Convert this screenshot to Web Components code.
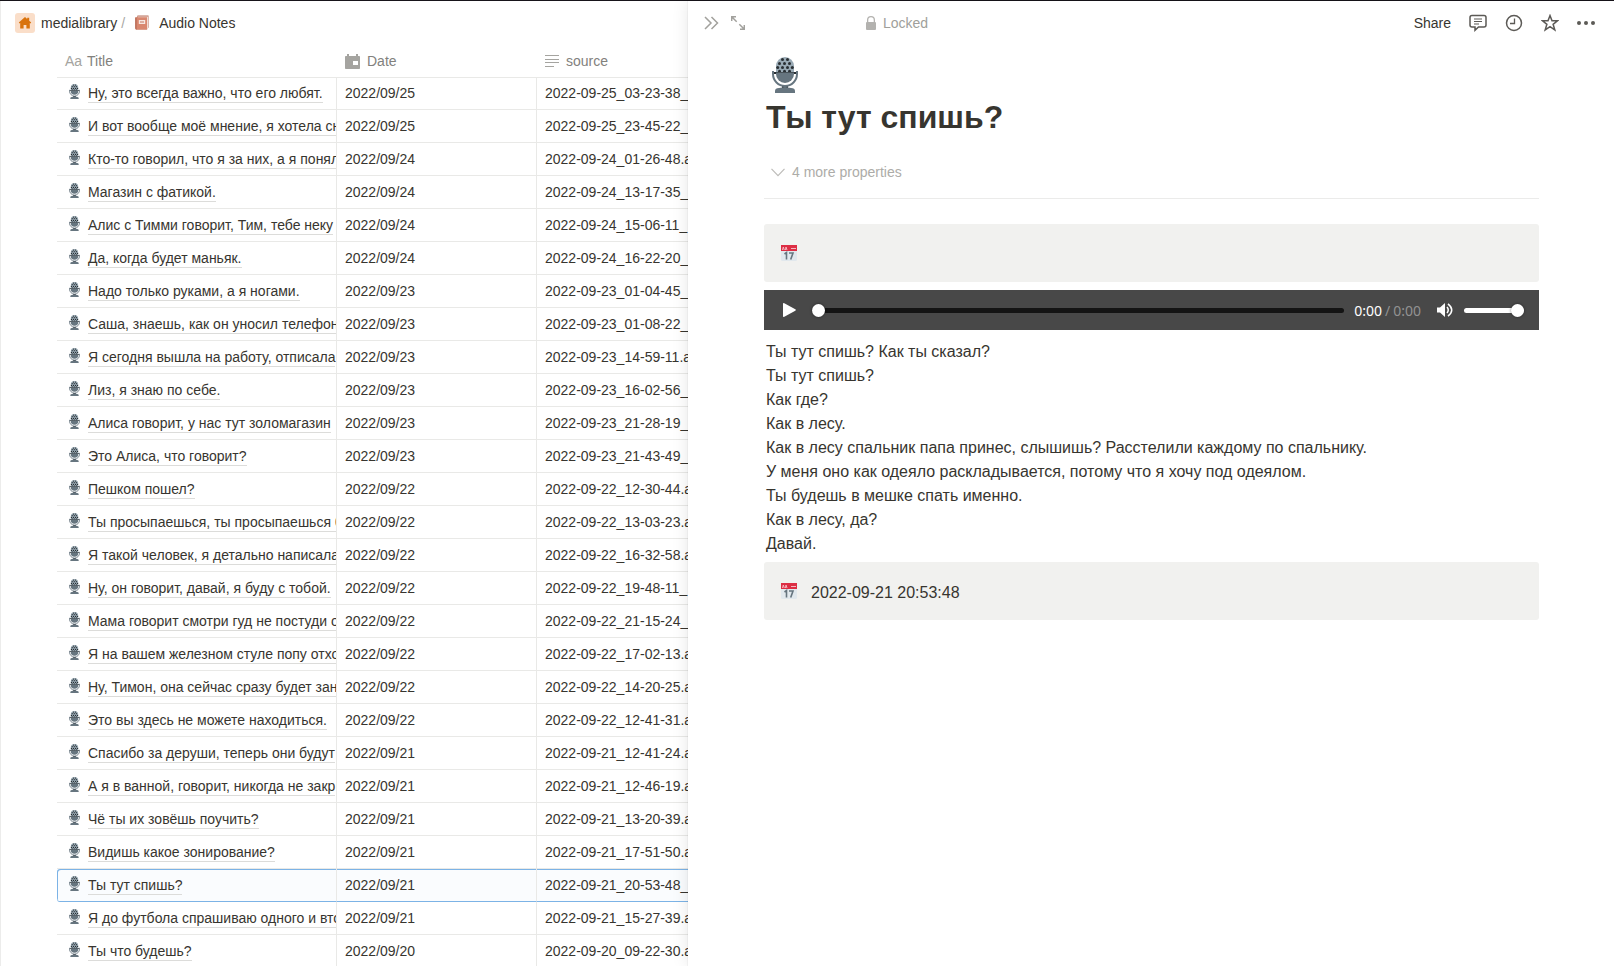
<!DOCTYPE html>
<html lang="ru">
<head>
<meta charset="utf-8">
<title>Audio Notes</title>
<style>
html, body { margin: 0; height: 100%; }
body { font-family: "Liberation Sans", Arial, sans-serif; font-size: 14px; color: #37352f; background: #fff; overflow: hidden; }
</style>
</head>
<body>
<media-library></media-library>

<template id="t-app">
<style>
:host { display: grid; grid-template-columns: minmax(0, 688fr) minmax(0, 926fr); grid-template-rows: minmax(0, 1fr); height: 100vh; box-sizing: border-box; border-top: 1px solid #17141a; }
main { min-width: 0; overflow: hidden; border-left: 1px solid #ececeb; display: flex; flex-direction: column; }
</style>
<main>
  <bread-crumbs></bread-crumbs>
  <notes-table></notes-table>
</main>
<side-peek></side-peek>
</template>

<template id="t-crumbs">
<style>
:host { display: block; height: 44px; flex: none; }
nav { display: flex; align-items: center; height: 44px; padding-left: 14px; font-size: 14px; line-height: 18px; }
a { display: flex; align-items: center; color: #37352f; text-decoration: none; white-space: nowrap; }
.home { width: 20px; height: 20px; border-radius: 3px; background: #fadec9; margin-right: 6px; display: flex; align-items: center; justify-content: center; }
.sep { color: #a9a8a4; margin: 0 9px 0 4px; }
.book { margin-right: 9px; }
svg { display: block; }
</style>
<nav aria-label="Breadcrumb">
  <a href="#library"><span class="home"><svg width="14" height="14" viewBox="0 0 14 14" fill="#d9730d"><path d="M7 1 0.8 6.6l.8.9.6-.4V12.6h3.4V9h2.8v3.6h3.4V7.1l.6.4.8-.9-2-1.8V1.8h-2v1.2z"/></svg></span>medialibrary</a>
  <span class="sep">/</span>
  <a href="#notes"><svg class="book" width="16" height="16" viewBox="0 0 16 16"><path d="M3 1.200Q3 .6 4 .6h10.500v12l-1.500 2H2z" fill="#b9705c"/><path d="M3 1.400h11v12l-1 1z" fill="#f2ddd5"/><path d="M1.200 3Q1.200 2.300 2 2.300h11v12.200H2.800q-1.600 0-1.600-1.500z" fill="#d9876f"/><path d="M1.200 2.600h1.500v11.900q-1.500 0-1.500-1.500z" fill="#b9705c"/><path d="M4.800 5h6.400v4H4.800z" fill="#f6e7e1"/><path d="M6 6.400h4v1.200H6z" fill="#cf8b79"/></svg>Audio Notes</a>
</nav>
</template>

<template id="t-mic">
<style>:host { display: inline-block; width: 11px; height: 15px; } svg { display: block; width: 100%; height: 100%; }</style>
<svg viewBox="0 0 26 36" aria-hidden="true">
<path d="M4 15V9a9 9 0 0 1 18 0v6z" fill="#99aab5"/>
<g fill="#292f33"><circle cx="10.500" cy="2.500" r="1.500"/><circle cx="15.500" cy="2.500" r="1.500"/><circle cx="7.500" cy="6.500" r="1.500"/><circle cx="12.500" cy="6.500" r="1.500"/><circle cx="17.500" cy="6.500" r="1.500"/><circle cx="5.700" cy="10.500" r="1.500"/><circle cx="10.500" cy="10.500" r="1.500"/><circle cx="15.500" cy="10.500" r="1.500"/><circle cx="20.300" cy="10.500" r="1.500"/><circle cx="7.500" cy="14.200" r="1.500"/><circle cx="12.500" cy="14.200" r="1.500"/><circle cx="17.500" cy="14.200" r="1.500"/><path d="M2 15h22v2H2zM10 29h6v2.500h-6z"/></g>
<path d="M4 15.500h18V17a9 9 0 0 1-18 0z" fill="#66757f"/>
<path d="M1 14v3a12 12 0 0 0 24 0v-3" fill="none" stroke="#66757f" stroke-width="2"/>
<path d="M3 36v-2q0-3 4-3l6-1 6 1q4 0 4 3v2z" fill="#66757f"/>
</svg>
</template>

<template id="t-table">
<style>
:host { display: block; padding: 0 0 0 56px; flex: none; }
table { table-layout: fixed; border-collapse: separate; border-spacing: 0; width: 831px; font-size: 14px; }
th { height: 32px; padding: 0 0 0 8px; text-align: left; font-weight: 400; color: #82817d; border-bottom: 1px solid #e9e9e7; }
th + th { padding-left: 9px; }
th span { display: flex; align-items: center; gap: 7px; }
th svg { display: block; flex: none; }
.aa { color: #a5a4a0; width: 16px; display: block; font-weight: 400; }
th:first-child span { gap: 6px; }
td { height: 32px; padding: 0 0 0 8px; border-bottom: 1px solid #e9e9e7; white-space: nowrap; overflow: hidden; vertical-align: middle; line-height: 20px; }
tr:first-child td { height: 30px; padding-bottom: 1px; }
td + td { border-left: 1px solid #e9e9e7; }
.title { display: flex; align-items: center; }
note-mic { flex: none; margin: 0 8px 4px 4px; }
a { color: inherit; text-decoration: none; border-bottom: 1px solid #dcdcda; line-height: 18px; margin-top: 1px; }
tr.sel td { background: #fafcfe; box-shadow: inset 0 1px #7cb3e6; border-bottom-color: #7cb3e6; }
tr.sel td:first-child { box-shadow: inset 1px 1px #7cb3e6; border-radius: 3px 0 0 3px; }
</style>
<table>
<colgroup><col style="width:279px"><col style="width:200px"><col style="width:352px"></colgroup>
<thead><tr>
<th scope="col"><span><b class="aa">Aa</b>Title</span></th>
<th scope="col"><span><svg width="15" height="15" viewBox="0 0 15 15" fill="#a5a4a0"><path fill-rule="evenodd" d="M2 2V0h2v2h7V0h2v2h1.200q.8 0 .8.8v11.400q0 .8-.8.8H.8q-.8 0-.8-.8V2.800Q0 2 .8 2zM8 7h5v4H8z"/></svg>Date</span></th>
<th scope="col"><span><svg width="14" height="12" viewBox="0 0 14 12" fill="#a5a4a0"><path d="M0 0h14v1H0zM0 4h14v1H0zM0 7h14v1H0zM0 11h9v1H0z"/></svg>source</span></th>
</tr></thead>
<tbody></tbody>
</table>
</template>

<template id="t-peek">
<style>
:host { display: flex; flex-direction: column; min-width: 0; background: #fff; box-shadow: 0 0 16px rgba(15,15,15,.1), 0 0 0 1px rgba(15,15,15,.03); position: relative; }
article { padding: 0 75px 0 76px; display: flex; flex-direction: column; }
.big { width: 26px; height: 36px; margin: 12px 0 0 8px; }
h1 { margin: 0; padding: 5px 2px 0; font-size: 32px; line-height: 38px; font-weight: 700; }
.more { align-self: flex-start; display: flex; align-items: center; gap: 7px; margin-top: 22px; padding: 0 0 0 7px; height: 28px; border: 0; background: none; font: inherit; color: #adaca8; }
hr { width: 100%; border: 0; border-top: 1px solid #ebebea; margin: 12px 0 25px; }
.body { padding: 0 2px; margin: 10px 0 6px; font-size: 16px; line-height: 24px; }
p { margin: 0; }
audio-bar { margin-top: 8px; }
</style>
<peek-bar></peek-bar>
<article>
<note-mic class="big"></note-mic>
<h1>Ты тут спишь?</h1>
<button class="more"><svg width="14" height="9" viewBox="0 0 14 9" fill="none" stroke="#bdbcb9" stroke-width="1.200"><path d="M.5.8 7 7.600 13.500.8"/></svg>4 more properties</button>
<hr>
<date-callout></date-callout>
<audio-bar></audio-bar>
<div class="body">
<p>Ты тут спишь? Как ты сказал?</p><p>Ты тут спишь?</p><p>Как где?</p><p>Как в лесу.</p><p>Как в лесу спальник папа принес, слышишь? Расстелили каждому по спальнику.</p><p>У меня оно как одеяло раскладывается, потому что я хочу под одеялом.</p><p>Ты будешь в мешке спать именно.</p><p>Как в лесу, да?</p><p>Давай.</p>
</div>
<date-callout>2022-09-21 20:53:48</date-callout>
</article>
</template>

<template id="t-bar">
<style>
:host { display: flex; align-items: center; height: 44px; flex: none; padding: 0 19px 0 16px; }
button { border: 0; padding: 0; background: none; font: inherit; line-height: 18px; color: #37352f; display: flex; align-items: center; }
svg { display: block; fill: none; stroke: #5c5a56; stroke-width: 1.500; }
.grey svg { stroke: #a2a19d; stroke-width: 1.500; }
.left { display: flex; align-items: center; gap: 12px; }
.lock { margin-left: 121px; gap: 7px; color: #a09f9b; }
.right { margin-left: auto; display: flex; align-items: center; gap: 18px; }
</style>
<div class="left">
<button class="grey" aria-label="Close"><svg width="15" height="14" viewBox="0 0 15 14"><path d="M1 1l6 6-6 6M7.500 1l6 6-6 6"/></svg></button>
<button class="grey" aria-label="Open as page"><svg width="14" height="14" viewBox="0 0 14 14"><path d="M.7 5V.7H5M.7.7l5 5M13.300 9v4.300H9M13.300 13.300l-5-5"/></svg></button>
</div>
<button class="lock"><svg style="stroke:none;fill:#b3b2af" width="10" height="14" viewBox="0 0 10 14"><path fill-rule="evenodd" d="M1 6V4a4 4 0 0 1 8 0v2q1 0 1 1v6q0 1-1 1H1q-1 0-1-1V7q0-1 1-1zM2.300 6h5.400V4a2.700 2.700 0 0 0-5.400 0z"/></svg>Locked</button>
<div class="right">
<button>Share</button>
<button aria-label="Comments"><svg width="18" height="18" viewBox="0 0 18 18"><path d="M3 1.500h12q2 0 2 2v7.500q0 2-2 2H9.500L6 16.300V13H3q-2 0-2-2V3.500q0-2 2-2z"/><path stroke-width="1.200" d="M5 5h8M5 7.500h8M5 10h5"/></svg></button>
<button aria-label="Updates"><svg width="18" height="18" viewBox="0 0 18 18"><circle cx="9" cy="9" r="7.500"/><path d="M9.500 4.500v5H5" stroke-width="1.300"/></svg></button>
<button aria-label="Favorite"><svg width="18" height="18" viewBox="0 0 18 18"><path d="M9 1.600l2 5.200h5.500l-4.400 3.500 1.700 5.600L9 12.600l-4.800 3.300 1.700-5.600L1.500 6.800H7z"/></svg></button>
<button aria-label="More"><svg width="18" height="6" viewBox="0 0 18 6" style="fill:#5c5a56;stroke:none"><circle cx="2" cy="3" r="2"/><circle cx="9" cy="3" r="2"/><circle cx="16" cy="3" r="2"/></svg></button>
</div>
</template>

<template id="t-callout">
<style>
:host { display: flex; align-items: flex-start; box-sizing: border-box; height: 58px; padding: 16px 17px; border-radius: 3px; background: #f1f1ef; font-size: 16px; line-height: 30px; gap: 14px; }
svg { display: block; flex: none; margin-top: 5px; }
</style>
<svg width="16" height="17" viewBox="0 0 16 17" aria-hidden="true"><path d="M0 5h16v9.500q0 1.500-1.500 1.500h-13Q0 16 0 14.500z" fill="#e1e8ed"/><path d="M0 0h16v6H0z" fill="#dd2e44"/><path d="M1.500 5l.8-3 1 3M4.500 5l.5-3 1 3M10 3.500h5" stroke="#f5b8c0" fill="none"/><path d="M3.500 9l2-1.500V14.500M8 8h4L9.700 14.500" stroke="#66757f" stroke-width="1.600" fill="none"/></svg>
<span><slot></slot></span>
</template>

<template id="t-audio">
<style>
:host { display: flex; align-items: center; height: 40px; background: #484848; padding: 0 15px 0 19px; font: 14px "Noto Sans", sans-serif; color: #fff; }
button { border: 0; padding: 0; background: none; display: block; flex: none; }
svg { display: block; }
input { appearance: none; margin: 0; background: transparent; height: 14px; display: block; }
input::-webkit-slider-runnable-track { height: 5px; border-radius: 3px; background: #141414; }
.vol::-webkit-slider-runnable-track { background: #fff; }
input::-webkit-slider-thumb { appearance: none; width: 13px; height: 13px; margin-top: -4px; border-radius: 50%; background: #fff; box-shadow: 0 0 3px rgba(0,0,0,.5); }
.seek { flex: 1; min-width: 0; margin: 0 10px 0 16px; }
.vol { width: 60px; margin-left: 11px; }
.slash { color: #929292; margin: 0 3px; }
.total { color: #929292; margin-right: 16px; }
</style>
<button aria-label="Play"><svg width="13" height="14" viewBox="0 0 13 14" fill="#fff"><path d="M0 1Q0-.3 1.300.3L12.300 6.300q1 .7 0 1.400L1.300 13.700Q0 14.300 0 13z"/></svg></button>
<input class="seek" type="range" min="0" max="100" value="0" aria-label="Position">
<span>0:00</span><span class="slash">/</span><span class="total">0:00</span>
<button aria-label="Mute"><svg width="16" height="14" viewBox="0 0 16 14"><path d="M0 4.500h3L8 0v14L3 9.500H0z" fill="#fff"/><path d="M10 4q2.500 3 0 6M11 .8q7.500 6.200 0 12.400" stroke="#fff" stroke-width="1.500" fill="none"/></svg></button>
<input class="vol" type="range" min="0" max="100" value="100" aria-label="Volume">
</template>

<script>
function component(name, templateId, setup) {
  customElements.define(name, class extends HTMLElement {
    constructor() {
      super();
      const root = this.attachShadow({ mode: 'open' });
      root.append(document.getElementById(templateId).content.cloneNode(true));
      if (setup) setup(root);
    }
  });
}

const notes = [
  ['Ну, это всегда важно, что его любят.', '25', '2022-09-25_03-23-38_'],
  ['И вот вообще моё мнение, я хотела сн', '25', '2022-09-25_23-45-22_'],
  ['Кто-то говорил, что я за них, а я понял', '24', '2022-09-24_01-26-48.a'],
  ['Магазин с фатикой.', '24', '2022-09-24_13-17-35_'],
  ['Алис с Тимми говорит, Тим, тебе неку', '24', '2022-09-24_15-06-11_'],
  ['Да, когда будет маньяк.', '24', '2022-09-24_16-22-20_'],
  ['Надо только руками, а я ногами.', '23', '2022-09-23_01-04-45_'],
  ['Саша, знаешь, как он уносил телефон', '23', '2022-09-23_01-08-22_'],
  ['Я сегодня вышла на работу, отписала', '23', '2022-09-23_14-59-11.a'],
  ['Лиз, я знаю по себе.', '23', '2022-09-23_16-02-56_'],
  ['Алиса говорит, у нас тут золомагазин', '23', '2022-09-23_21-28-19_'],
  ['Это Алиса, что говорит?', '23', '2022-09-23_21-43-49_'],
  ['Пешком пошел?', '22', '2022-09-22_12-30-44.a'],
  ['Ты просыпаешься, ты просыпаешься б', '22', '2022-09-22_13-03-23.a'],
  ['Я такой человек, я детально написала', '22', '2022-09-22_16-32-58.a'],
  ['Ну, он говорит, давай, я буду с тобой.', '22', '2022-09-22_19-48-11_'],
  ['Мама говорит смотри гуд не постуди о', '22', '2022-09-22_21-15-24_'],
  ['Я на вашем железном стуле попу отхо', '22', '2022-09-22_17-02-13.a'],
  ['Ну, Тимон, она сейчас сразу будет зан', '22', '2022-09-22_14-20-25.a'],
  ['Это вы здесь не можете находиться.', '22', '2022-09-22_12-41-31.a'],
  ['Спасибо за деруши, теперь они будут', '21', '2022-09-21_12-41-24.a'],
  ['А я в ванной, говорит, никогда не закр', '21', '2022-09-21_12-46-19.a'],
  ['Чё ты их зовёшь поучить?', '21', '2022-09-21_13-20-39.a'],
  ['Видишь какое зонирование?', '21', '2022-09-21_17-51-50.a'],
  ['Ты тут спишь?', '21', '2022-09-21_20-53-48_'],
  ['Я до футбола спрашиваю одного и вто', '21', '2022-09-21_15-27-39.a'],
  ['Ты что будешь?', '20', '2022-09-20_09-22-30.a']
];

component('note-mic', 't-mic');
component('date-callout', 't-callout');
component('audio-bar', 't-audio');
component('peek-bar', 't-bar');
component('bread-crumbs', 't-crumbs');
component('notes-table', 't-table', root => {
  root.querySelector('tbody').innerHTML = notes.map(([title, day, source]) =>
    `<tr${title === 'Ты тут спишь?' ? ' class="sel"' : ''}><td><div class="title"><note-mic></note-mic><a href="#note">${title}</a></div></td><td>2022/09/${day}</td><td>${source}</td></tr>`).join('');
});
component('side-peek', 't-peek');
component('media-library', 't-app');
</script>
</body>
</html>
